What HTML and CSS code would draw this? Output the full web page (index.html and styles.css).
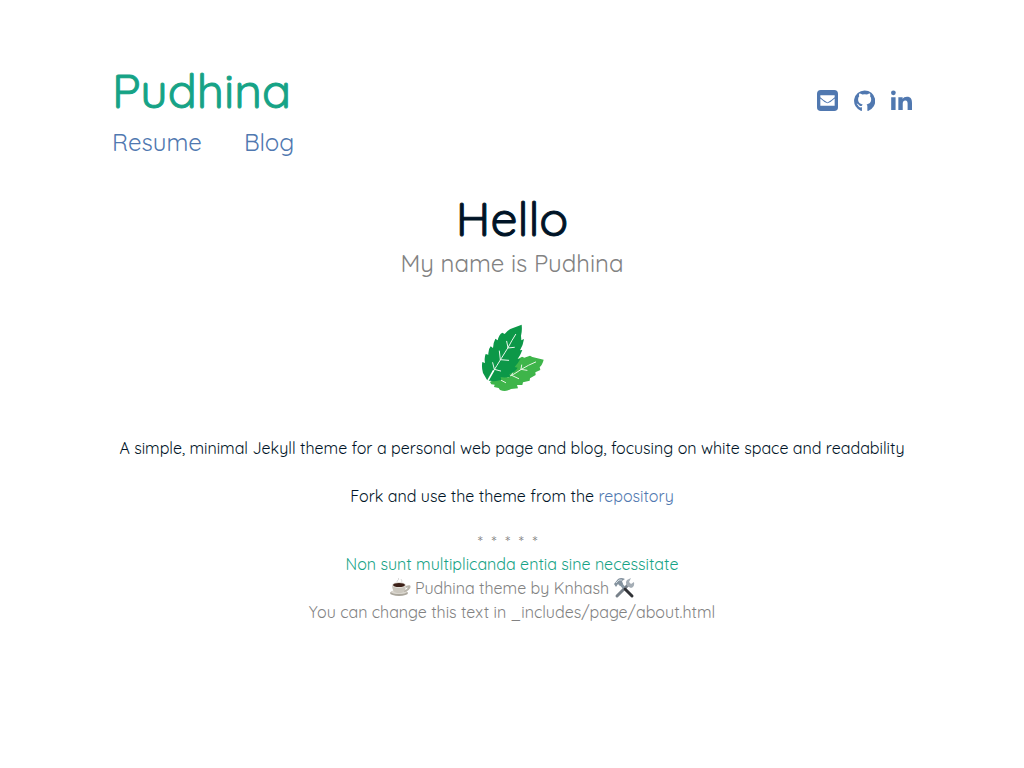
FILE: index.html
```html
<!DOCTYPE html>
<html lang="en">
<head>
<meta charset="utf-8">
<meta name="viewport" content="width=device-width, initial-scale=1">
<title>Pudhina</title>
<link rel="stylesheet" href="styles.css">
</head>
<body>
<div class="wrapper">
  <header class="site-header">
    <div class="brand-row">
      <a class="site-title" href="#">Pudhina</a>
      <div class="social">
        <a href="#" aria-label="Email">
          <svg class="icon" viewBox="1 1 22 22" aria-hidden="true"><path fill-rule="evenodd" d="M5 1h14a4 4 0 0 1 4 4v14a4 4 0 0 1-4 4H5a4 4 0 0 1-4-4V5a4 4 0 0 1 4-4zm-.5 5.500v2q3 3 7.500 5.500 4.500-2.500 7.500-5.500v-2zm0 3.500v7.500h15V10q-4 4-7.500 5-3.500-1-7.500-5z"/></svg>
        </a>
        <a href="#" aria-label="GitHub">
          <svg class="icon" viewBox="1 1 22 22" aria-hidden="true"><path d="M12 1.500a11 11 0 0 0-3.500 21.400c.6.100.8-.2.800-.5v-3.300c-2.500.5-3.400-.5-3.900-1.500-.3-.7-.6-1.200-1.200-1.600-.4-.3-.8-.7 0-.7.800 0 1.500.7 1.800 1.200.9 1.500 2.300 1.400 3.400 1 .1-.7.400-1.200.8-1.500-2.700-.4-4.900-1.600-4.900-5.300 0-1.300.4-2.300 1.200-3.100-.2-.5-.5-1.600.1-3 0 0 1.200-.3 3.100 1.100a11 11 0 0 1 5 0c1.900-1.400 3-1.100 3-1.100.6 1.400.3 2.500.1 3 .8.800 1.200 1.800 1.200 3.100 0 3.700-2.200 4.900-4.900 5.300.5.400.9 1.100.9 2.200v4.200c0 .3.200.6.800.5A11 11 0 0 0 12 1.500z"/></svg>
        </a>
        <a href="#" aria-label="LinkedIn">
          <svg class="icon" viewBox="1 1 22 22" aria-hidden="true"><circle cx="3.500" cy="4" r="2.500"/><path d="M1.200 8.500h4.600V22H1.200zM8.700 8.500h4.500v2c.8-1.500 2.400-2.400 4.500-2.400 4.300 0 5.300 2.600 5.300 6.700V22h-4.600v-6.500c0-2-.4-3.500-2.400-3.500s-2.700 1.400-2.700 3.500V22H8.700z"/></svg>
        </a>
      </div>
    </div>
    <nav class="site-nav">
      <a href="#">Resume</a>
      <a href="#">Blog</a>
    </nav>
  </header>
  <main class="intro">
    <h1>Hello</h1>
    <p class="tagline">My name is Pudhina</p>
    <svg class="leaf" viewBox="0 0 240 255" role="img" aria-label="Mint leaves">
      <path fill="#3eb54a" d="M54 201Q75 190 88 171Q110 145 120 145L131 134L142 130L150 125L157 128L174 122L181 126L215 134Q211 150 203 156L205 165L190 172L191 180L174 190L173 197L153 202L151 210L135 210L138 220L117 222Q102 232 84 225L80 219L66 216L68 209L58 208Z"/>
      <path fill="none" stroke="#e8f6e4" stroke-linecap="round" stroke-width="3" d="M108 186Q124 180 148 163Q169 150 191 141M147 163L149 150M147 163L165 166M119 181L123 170M119 181L140 191M88 196L101 203"/>
      <path fill="#0c9848" d="M47 198L33 174Q28 157 31 141L39 144Q36 128 41 117L49 119Q48 103 56 94L63 99Q64 82 70 71L77 76Q81 58 91 53L98 57Q108 43 123 39L149 29Q151 48 147 62L148 76L156 72Q153 92 144 106L151 105Q146 119 137 132L145 132Q138 145 128 156L137 158Q128 173 112 177L115 185Q99 189 86 186L88 194Q70 201 54 197Z"/>
      <path fill="none" stroke="#eaf7ec" stroke-linecap="round" stroke-width="3" d="M62 172Q90 127 108 98Q119 77 131 58M108 98L104 79M107 99L127 97M85 134L82 108M85 134L110 136M67 163L62 143M67 163L86 168"/>
      <path fill="none" stroke="#fff" stroke-width="5" d="M46 200L65 166"/>
    </svg>
    <p>A simple, minimal Jekyll theme for a personal web page and blog, focusing on white space and readability</p>
    <p>Fork and use the theme from the <a href="#">repository</a></p>
  </main>
  <footer class="site-footer">
    <div class="stars">*&nbsp; *&nbsp; *&nbsp; *&nbsp; *&nbsp;&nbsp;</div>
    <div class="motto">Non sunt multiplicanda entia sine necessitate</div>
    <div class="credit">
      <svg class="emoji" viewBox="0 0 22 22" role="img" aria-label="Coffee">
        <path d="M9 6q-2-2 0-3t0-2M12 6q2-2 0-4" fill="none" stroke="#ddd"/>
        <ellipse cx="10" cy="16" rx="9" ry="3" fill="#aaa69c"/><ellipse cx="10" cy="15" rx="8" ry="2" fill="#dad6ce"/>
        <path d="M17 10q5-2 3 1t-5 3" fill="none" stroke="#b9b5ab" stroke-width="2"/>
        <path d="M3 8h14q0 7-5 8H8Q3 15 3 8z" fill="#cbc7be"/><ellipse cx="10" cy="8" rx="7" ry="3" fill="#e5e2dc"/><ellipse cx="10" cy="8" rx="6" ry="2" fill="#3d2118"/>
      </svg>
      <span>Pudhina theme by Knhash</span>
      <svg class="emoji" viewBox="0 0 22 22" role="img" aria-label="Tools">
        <path d="M4 19L15 8" stroke="#78818a" stroke-width="3" stroke-linecap="round"/><path d="M14 9q-2-4 0-6l4-2-2 4 2 2 3-2q1 5-3 6z" fill="#a4adb5"/>
        <path d="M7 6l5 6" stroke="#8998a4" stroke-width="3"/><path d="M12 12l7 7" stroke="#303236" stroke-width="3" stroke-linecap="round"/><path d="M1 7l4-5q3-2 7 0L9 4l1 3-3 2-2-2-2 3z" fill="#84929e"/><path d="M3 6l3-3h3" fill="none" stroke="#d3dce2"/>
      </svg>
    </div>
    <div>You can change this text in _includes/page/about.html</div>
  </footer>
</div>
</body>
</html>
```
FILE: styles.css
```css
* { box-sizing: border-box; }
body {
  margin: 0;
  background: #fff;
  color: #001427;
  font-family: Quicksand, Lato, "Noto Sans", sans-serif;
  font-size: 16px;
  line-height: 24px;
}
a { color: #5078b0; text-decoration: none; }
.wrapper { max-width: 864px; margin: 0 auto; padding: 58px 32px; }
.brand-row { display: flex; align-items: center; justify-content: space-between; }
.site-title, h1 {
  font-size: 48px;
  font-weight: 400;
  line-height: 64px;
  -webkit-text-stroke: 1px currentColor;
}
.site-title { color: #16a386; }
h1 { margin: 0; }
.social { display: flex; gap: 16px; padding-top: 20px; }
.icon { display: block; width: 21px; height: 21px; fill: #5078b0; }
.site-nav { display: flex; gap: 42px; padding-top: 2px; font-size: 24px; line-height: 36px; }
.intro { padding-top: 26px; text-align: center; }
p { margin: 0 0 24px; }
.tagline { margin: 0; color: #828282; font-size: 24px; line-height: 26px; }
.leaf { display: block; width: 80px; height: 85px; margin: 39px auto 36px; }
.site-footer { color: #828282; text-align: center; }
.stars { line-height: 20px; }
.motto { color: #16a386; }
.credit { display: flex; align-items: center; justify-content: center; gap: 4px; }
.emoji { width: 22px; height: 22px; }
```
